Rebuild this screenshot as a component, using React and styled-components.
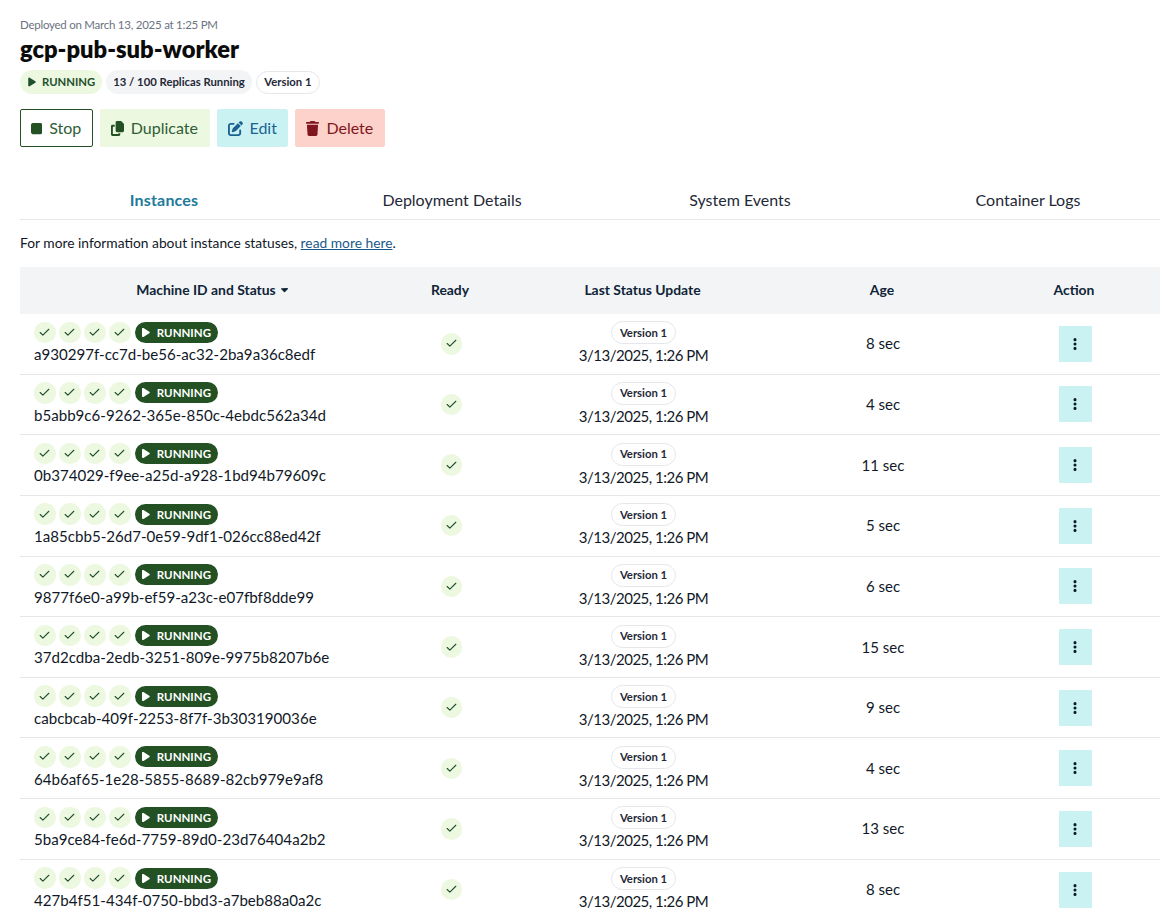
import React from "react";
import styled, { createGlobalStyle } from "styled-components";
import { FaPlay, FaStop, FaCopy, FaPenToSquare, FaTrash, FaEllipsisVertical, FaCaretDown } from "react-icons/fa6";
import { Check } from "lucide-react";

const Global = createGlobalStyle`
  html, body { margin: 0; padding: 0; background: #fff; overflow: hidden; height: 914px; }
  body { font-family: "Lato", "Noto Sans", sans-serif; color: #111827; }
`;

const Page = styled.div`
  width: 1152px;
  padding: 16px 0 0 20px;
`;
const Deployed = styled.div`
  font-size: 11.5px;
  letter-spacing: -0.25px;
  line-height: 18px;
  color: #6b7280;
`;
const Title = styled.h1`
  margin: 1px 0 0;
  font-size: 23.7px;
  line-height: 28px;
  font-weight: 800;
  color: #0b0b0b;
`;
const BadgeRow = styled.div`
  display: flex;
  align-items: center;
  gap: 4px;
  margin-top: 7px;
`;
const Pill = styled.span`
  display: inline-flex;
  align-items: center;
  gap: 5px;
  box-sizing: border-box;
  height: 24px;
  padding: 0 7px 2px;
  border-radius: 12px;
  font-size: 11.3px;
  font-weight: 700;
  background: ${p => p.$bg};
  color: ${p => p.$fg};
  svg { margin-top: 2px; }
`;
const VersionPill = styled.span`
  display: inline-flex;
  align-items: center;
  justify-content: center;
  box-sizing: border-box;
  height: 23px;
  padding: 0 7.5px 1px;
  border: 1px solid #e5e7eb;
  border-radius: 12px;
  font-size: 11.3px;
  font-weight: 700;
  color: #1f2937;
  background: #fff;
`;
const Actions = styled.div`
  display: flex;
  gap: 7px;
  margin-top: 15px;
`;
const Btn = styled.button`
  display: inline-flex;
  align-items: center;
  gap: 7px;
  box-sizing: border-box;
  height: 38px;
  padding: 0 10.5px 2px 10px;
  font-family: inherit;
  font-size: 16px;
  background: ${p => p.$bg};
  color: ${p => p.$fg};
  border: 1px solid ${p => p.$border || p.$bg};
  border-radius: 2px;
  svg {
    width: ${p => p.$iconWidth}px;
    height: 15px;
    margin-top: 2px;
    color: ${p => p.$icon || p.$fg};
  }
`;
const Tabs = styled.nav`
  display: grid;
  grid-template-columns: repeat(4, 288px);
  margin-top: 34px;
`;
const Tab = styled.div`
  box-sizing: border-box;
  height: 39px;
  padding-bottom: 2px;
  display: flex;
  align-items: center;
  justify-content: center;
  font-size: 16px;
  font-weight: ${p => (p.$active ? 700 : 400)};
  letter-spacing: ${p => (p.$active ? "0.2px" : "0")};
  color: ${p => (p.$active ? "#217a9a" : "#1f2937")};
  border-bottom: 1px solid #e5e7eb;
`;
const Info = styled.p`
  margin: 14px 0 0;
  font-size: 13.8px;
  line-height: 18px;
  color: #111827;
  a { color: #1a5a8a; text-decoration: underline; }
`;
const Table = styled.div`
  margin-top: 15px;
  width: 1153px;
`;
const Row = styled.div`
  display: grid;
  grid-template-columns: 384px 94px 291px 188px 196px;
  align-items: center;
  box-sizing: border-box;
  height: 60.65px;
  border-bottom: 1px solid #e5e7eb;
`;
const Head = styled(Row)`
  height: 47px;
  background: #f3f4f6;
  border-bottom: none;
  padding-bottom: 2px;
`;
const Th = styled.div`
  display: flex;
  justify-content: center;
  align-items: center;
  gap: 3px;
  padding-right: 2px;
  font-size: 13.9px;
  font-weight: 700;
  color: #0f2438;
  svg { width: 11px; height: 11px; }
`;
const MachineTh = styled(Th)`
  padding-right: 0;
  padding-left: 2px;
`;
const MachineCell = styled.div`
  padding-left: 14px;
  display: flex;
  flex-direction: column;
`;
const Statuses = styled.div`
  display: flex;
  align-items: center;
  gap: 3.5px;
`;
const CheckDot = styled.span`
  display: inline-flex;
  align-items: center;
  justify-content: center;
  width: 21.5px;
  height: 21.5px;
  flex: none;
  border-radius: 50%;
  background: #ecf8e0;
  color: #1f4f2c;
  svg { width: 13px; height: 13px; }
`;
const RunningTag = styled.span`
  display: inline-flex;
  align-items: center;
  gap: 7px;
  height: 21px;
  margin-left: 1px;
  padding: 0 7px;
  width: 83px;
  box-sizing: border-box;
  border-radius: 11px;
  background: #235123;
  color: #fff;
  font-size: 11.5px;
  font-weight: 700;
  svg { width: 11px; height: 11px; }
`;
const MachineId = styled.div`
  font-size: 15.1px;
  line-height: 23px;
  color: #111827;
`;
const Center = styled.div`
  display: flex;
  flex-direction: column;
  align-items: center;
  justify-content: center;
  font-size: 15px;
  color: #111827;
`;
const ReadyCell = styled(Center)`
  padding-left: 1px;
`;
const AgeCell = styled(Center)`
  padding-bottom: 1px;
`;
const DateText = styled.div`
  font-size: 15px;
  letter-spacing: -0.5px;
  line-height: 22px;
`;
const MenuButton = styled.button`
  width: 33px;
  height: 36px;
  display: flex;
  align-items: center;
  justify-content: center;
  padding: 0;
  border: none;
  background: #caf2f2;
  color: #0b1a2a;
  svg { width: 14px; height: 14px; }
`;

const rows = [
  ["a930297f-cc7d-be56-ac32-2ba9a36c8edf", "8 sec"],
  ["b5abb9c6-9262-365e-850c-4ebdc562a34d", "4 sec"],
  ["0b374029-f9ee-a25d-a928-1bd94b79609c", "11 sec"],
  ["1a85cbb5-26d7-0e59-9df1-026cc88ed42f", "5 sec"],
  ["9877f6e0-a99b-ef59-a23c-e07fbf8dde99", "6 sec"],
  ["37d2cdba-2edb-3251-809e-9975b8207b6e", "15 sec"],
  ["cabcbcab-409f-2253-8f7f-3b303190036e", "9 sec"],
  ["64b6af65-1e28-5855-8689-82cb979e9af8", "4 sec"],
  ["5ba9ce84-fe6d-7759-89d0-23d76404a2b2", "13 sec"],
  ["427b4f51-434f-0750-bbd3-a7beb88a0a2c", "8 sec"],
];

const Tick = () => (
  <CheckDot>
    <Check strokeWidth={2} />
  </CheckDot>
);

export default function App() {
  return (
    <Page>
      <Global />
      <Deployed>Deployed on March 13, 2025 at 1:25 PM</Deployed>
      <Title>gcp-pub-sub-worker</Title>
      <BadgeRow>
        <Pill $bg="#ecf8e0" $fg="#1f4f2c"><FaPlay size={10} />RUNNING</Pill>
        <Pill $bg="#f3f4f6" $fg="#1f2937">13 / 100 Replicas Running</Pill>
        <VersionPill>Version 1</VersionPill>
      </BadgeRow>
      <Actions>
        <Btn $iconWidth={11.25} $bg="#fff" $fg="#2f5d37" $border="#235123" $icon="#235123"><FaStop />Stop</Btn>
        <Btn $iconWidth={13} $bg="#ecf8e0" $fg="#2f5d37" $icon="#235123"><FaCopy />Duplicate</Btn>
        <Btn $iconWidth={15} $bg="#caf2f2" $fg="#1a6391"><FaPenToSquare />Edit</Btn>
        <Btn $iconWidth={13} $bg="#fdd2cb" $fg="#7f1620"><FaTrash />Delete</Btn>
      </Actions>
      <Tabs>
        <Tab $active>Instances</Tab>
        <Tab>Deployment Details</Tab>
        <Tab>System Events</Tab>
        <Tab>Container Logs</Tab>
      </Tabs>
      <Info>For more information about instance statuses, <a href="#more">read more here</a>.</Info>
      <Table>
        <Head>
          <MachineTh>Machine ID and Status <FaCaretDown /></MachineTh>
          <Th>Ready</Th>
          <Th>Last Status Update</Th>
          <Th>Age</Th>
          <Th>Action</Th>
        </Head>
        {rows.map(([id, age]) => (
          <Row key={id}>
            <MachineCell>
              <Statuses>
                <Tick /><Tick /><Tick /><Tick />
                <RunningTag><FaPlay />RUNNING</RunningTag>
              </Statuses>
              <MachineId>{id}</MachineId>
            </MachineCell>
            <ReadyCell><Tick /></ReadyCell>
            <Center>
              <VersionPill>Version 1</VersionPill>
              <DateText>3/13/2025, 1:26 PM</DateText>
            </Center>
            <AgeCell>{age}</AgeCell>
            <Center>
              <MenuButton aria-label="Actions"><FaEllipsisVertical /></MenuButton>
            </Center>
          </Row>
        ))}
      </Table>
    </Page>
  );
}
